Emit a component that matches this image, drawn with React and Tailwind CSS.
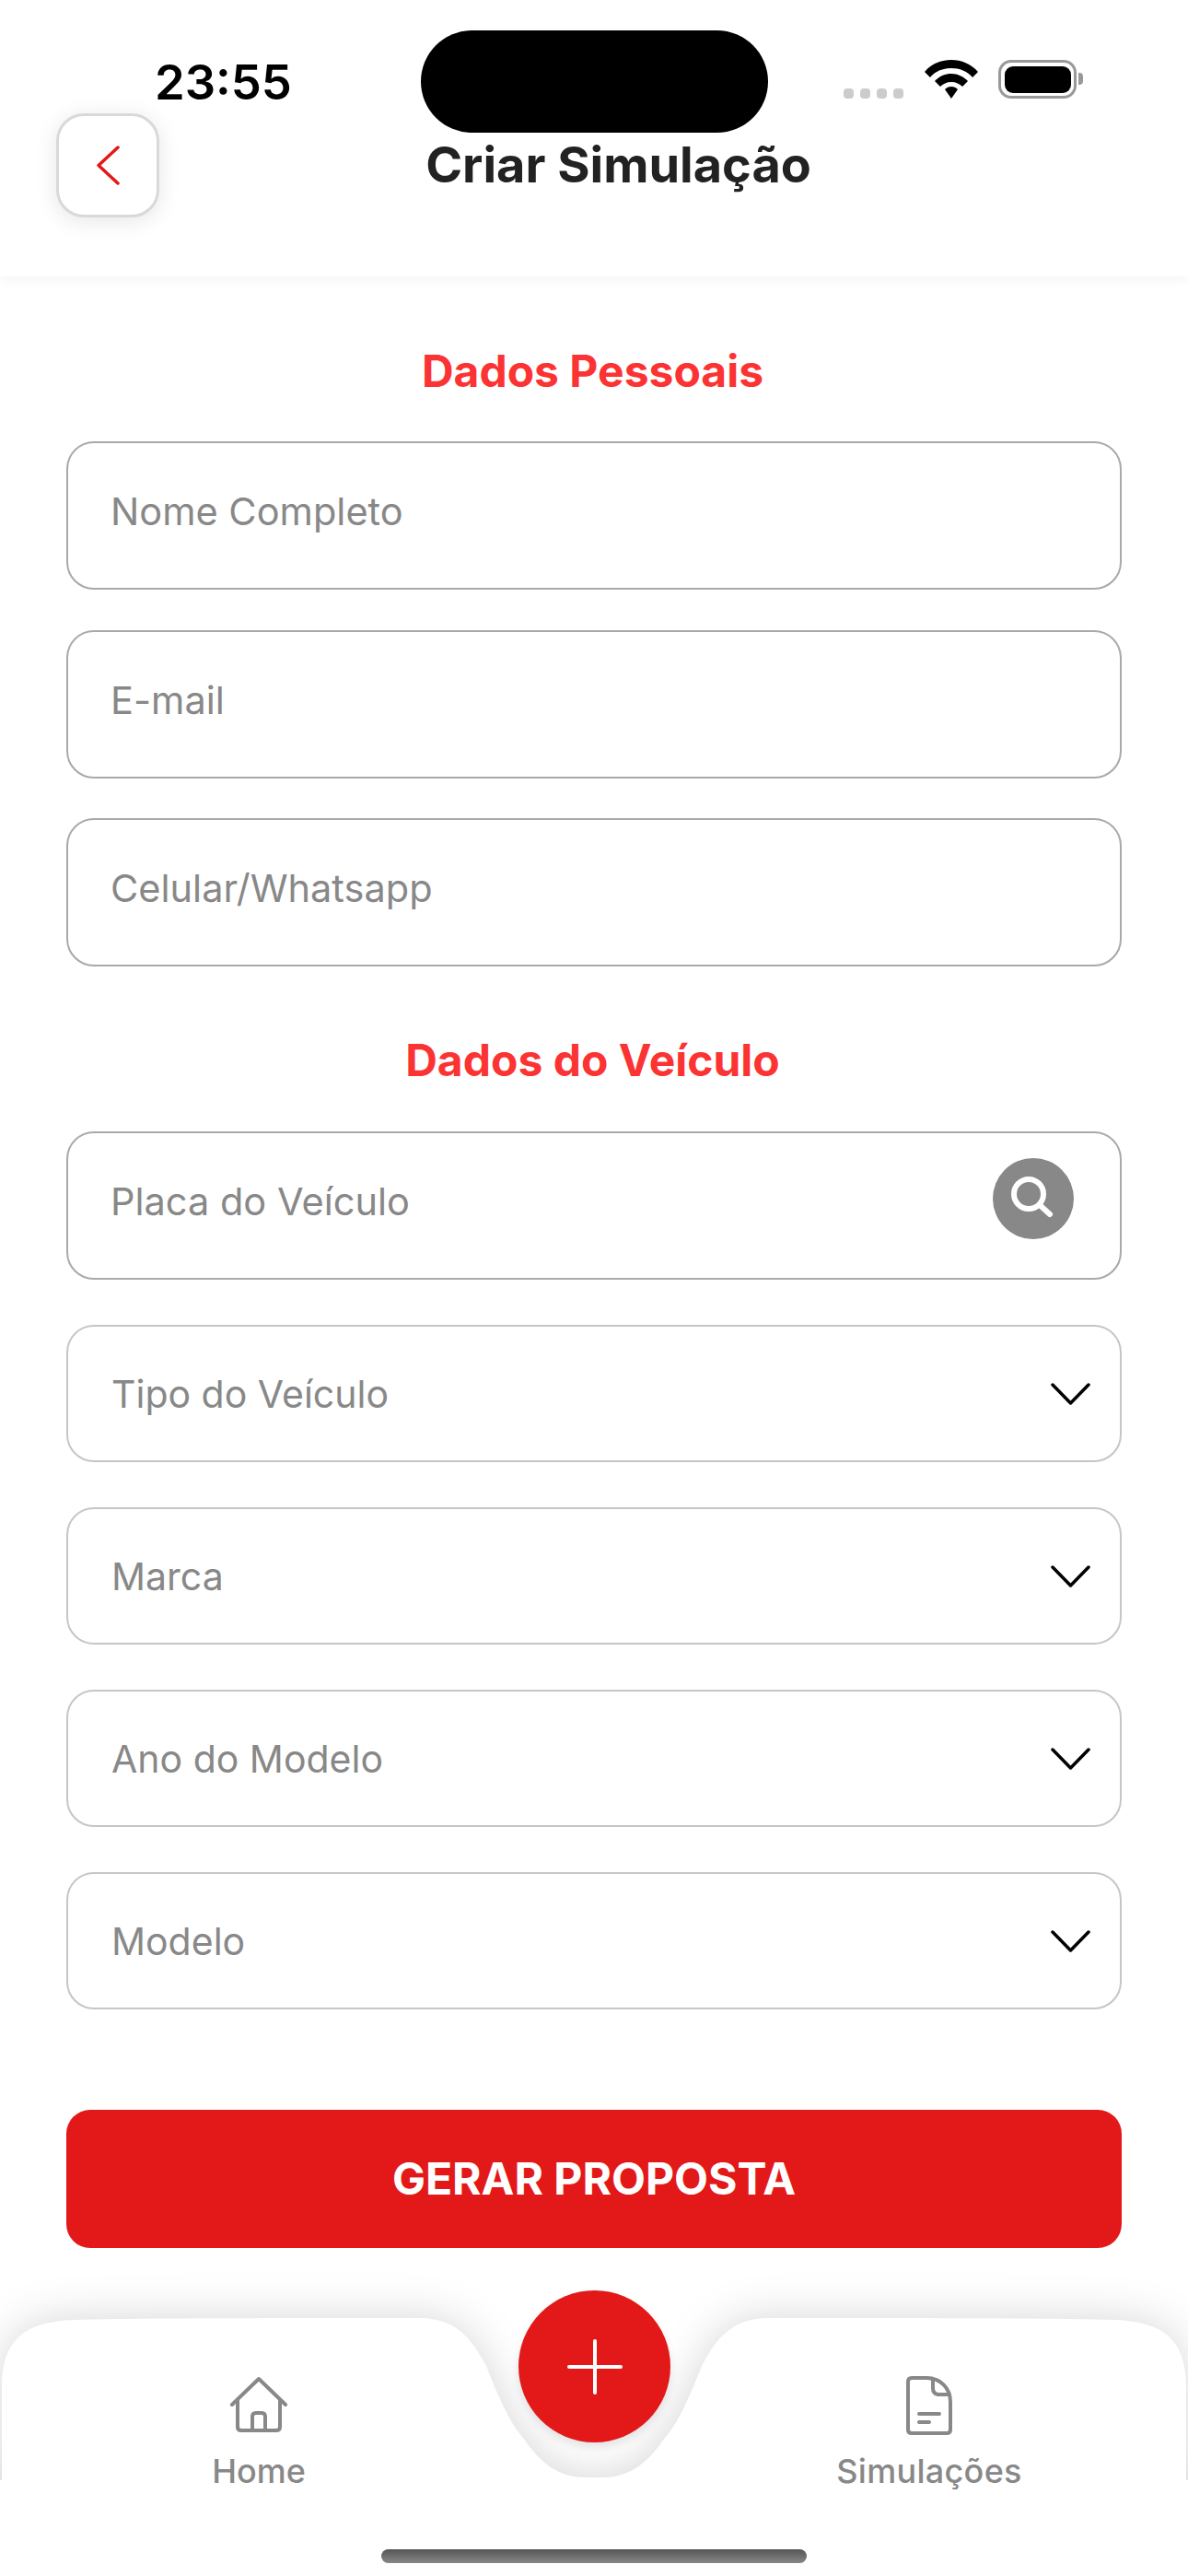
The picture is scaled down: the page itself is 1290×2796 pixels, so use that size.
const font = { fontFamily: "Inter, 'Noto Sans', sans-serif" };

function Field({ label, children }) {
  return (
    <div className="h-[161px] rounded-[30px] border-2 border-[#a9a9a9] bg-white flex items-center justify-between pl-[46px] pr-[50px]">
      <span className="text-[41.5px] leading-[50px] pb-[9px] text-[#888888]">{label}</span>
      {children}
    </div>
  );
}

function SelectField({ label }) {
  return (
    <div className="h-[149px] rounded-[30px] border-2 border-[#c6c6c6] bg-white flex items-center justify-between pl-[47px] pr-[32px]">
      <span className="text-[41px] leading-[50px] text-[#888888]">{label}</span>
      <svg width="44" height="26" viewBox="0 0 44 26" fill="none" stroke="#000" strokeWidth="3.5" strokeLinecap="round" strokeLinejoin="round">
        <path d="M3 3 L22.5 23 L42 3" />
      </svg>
    </div>
  );
}

function Heading({ children, className }) {
  return <h2 className={"h-[58px] pr-[3px] text-center text-[48px] leading-[58px] font-bold text-[#fb3333] " + className}>{children}</h2>;
}

function StatusBar() {
  return (
    <div className="flex items-start h-[144px] pt-[33px]">
      <div className="ml-[168px] w-[289px] mt-[24px] text-[52.5px] leading-[64px] font-semibold text-black">23:55</div>
      <div className="w-[377px] h-[111px] rounded-full bg-black" />
      <div className="ml-[82px] mt-[32px] h-[42px] flex items-end">
        <div className="flex gap-[7px] mr-[23px]">
          <span className="w-[11px] h-[11px] rounded-[4px] bg-[#cccccc]" />
          <span className="w-[11px] h-[11px] rounded-[4px] bg-[#cccccc]" />
          <span className="w-[11px] h-[11px] rounded-[4px] bg-[#cccccc]" />
          <span className="w-[11px] h-[11px] rounded-[4px] bg-[#cccccc]" />
        </div>
        <svg width="58" height="42" viewBox="0 0 58 42" fill="#000" className="mr-[22px]">
          <path d="M29 0 C40 0 50 4 58 13 L52 19 C46 12 38 9 29 9 C20 9 12 12 6 19 L0 13 C8 4 18 0 29 0 Z" />
          <path d="M29 15 C36 15 42 18 47 23 L41 29 C38 26 34 24 29 24 C24 24 20 26 17 29 L11 23 C16 18 22 15 29 15 Z" />
          <path d="M29 29 C32 29 34 30 36 32 L29 42 L22 32 C24 30 26 29 29 29 Z" />
        </svg>
        <div className="relative w-[85px] h-[42px] rounded-[14px] border-[3.5px] border-[#999999] p-[3.5px]">
          <div className="w-full h-full rounded-[9px] bg-black" />
          <div className="absolute left-[84px] top-[11px] w-[5px] h-[13px] rounded-r-[4px] bg-[#999999]" />
        </div>
      </div>
    </div>
  );
}

function Header() {
  return (
    <header className="h-[300px] bg-white shadow-[0_3px_12px_rgba(0,0,0,0.05)] relative">
      <StatusBar />
      <div className="flex items-center pl-[61px] pr-[120px] -mt-[21px]">
        <button className="w-[112px] h-[113px] rounded-[30px] bg-white border-[3px] border-[#d9d9d9] shadow-[0_4px_24px_rgba(0,0,0,0.1)] flex items-center justify-center shrink-0">
          <svg width="25" height="43" viewBox="0 0 25 43" fill="none" stroke="#e31919" strokeWidth="3.5" strokeLinecap="round" strokeLinejoin="round">
            <path d="M23 2 L2 21.5 L23 41" />
          </svg>
        </button>
        <h1 className="flex-1 text-center text-[54px] leading-[64px] font-bold text-[#222222] -mt-[2px]">Criar Simulação</h1>
      </div>
    </header>
  );
}

function Nav() {
  return (
    <nav className="relative h-[279px] mt-[76px]">
      <svg
        className="absolute left-0 top-0 overflow-visible drop-shadow-[0_0_24px_rgba(0,0,0,0.16)]"
        width="1290"
        height="279"
        viewBox="0 0 1290 279"
        fill="#fff"
      >
        <path d="M2 176 L2 75 C2 25 25 4 80 2 C150 0 300 0 455 0 C495 0 512 22 528 52 C545 95 555 115 568 130 C585 155 605 173 635 173 L655 173 C685 173 705 155 722 130 C735 115 745 95 762 52 C778 22 795 0 835 0 C990 0 1140 0 1210 2 C1265 4 1288 25 1288 75 L1288 176 L1320 176 L1320 300 L-30 300 L-30 176 Z" />
      </svg>
      <button className="absolute left-[563px] -top-[30px] w-[165px] h-[165px] rounded-full bg-[#e31919] shadow-[0_5px_10px_rgba(0,0,0,0.1)] flex items-center justify-center">
        <svg width="60" height="60" viewBox="0 0 60 60" fill="none" stroke="#fff" strokeWidth="4" strokeLinecap="round">
          <path d="M30 2 V58 M2 30 H58" />
        </svg>
      </button>
      <div className="relative flex justify-between px-[81px] pt-[63px]">
        <div className="w-[400px] flex flex-col items-center">
          <svg width="64" height="62" viewBox="0 0 64 62" fill="none" stroke="#888888" strokeWidth="4" strokeLinecap="round" strokeLinejoin="round">
            <path d="M3 31 L32 3 L61 31" />
            <path d="M9 26 V55 Q9 59 13 59 H51 Q55 59 55 55 V26" />
            <path d="M25 59 V44 Q25 40 29 40 H35 Q39 40 39 44 V59" />
          </svg>
          <span className="mt-[19px] text-[36px] leading-[44px] font-[450] text-[#888888]">Home</span>
        </div>
        <div className="w-[400px] flex flex-col items-center">
          <svg width="50" height="64" viewBox="0 0 50 64" fill="none" stroke="#888888" strokeWidth="4" strokeLinecap="round" strokeLinejoin="round">
            <path d="M6 2 H22 C37 2 48 13 48 28 V58 Q48 62 44 62 H6 Q2 62 2 58 V6 Q2 2 6 2 Z" />
            <path d="M29 4 V13 Q29 20 36 20 H47" />
            <path d="M14 41 H36 M14 50 H25" />
          </svg>
          <span className="mt-[17px] text-[36px] leading-[44px] font-[450] text-[#888888] tracking-[0.3px]">Simulações</span>
        </div>
      </div>
      <div className="relative mx-auto mt-[63px] w-[462px] h-[15px] rounded-full bg-gradient-to-b from-[#555555] to-[#888888]" />
    </nav>
  );
}

export default function App() {
  return (
    <div className="w-[1290px] h-[2796px] bg-white overflow-hidden" style={font}>
      <Header />
      <main className="px-[72px] pt-[74px]">
        <Heading className="mb-[47px]">Dados Pessoais</Heading>
        <div className="flex flex-col gap-[43.5px]">
          <Field label="Nome Completo" />
          <Field label="E-mail" />
          <Field label="Celular/Whatsapp" />
        </div>
        <Heading className="mt-[73px] mb-[48px]">Dados do Veículo</Heading>
        <Field label="Placa do Veículo">
          <div className="w-[88px] h-[88px] rounded-full bg-[#888888] flex items-center justify-center mb-[16px]">
            <svg width="50" height="50" viewBox="0 0 50 50" fill="none" stroke="#fff" strokeWidth="6" strokeLinecap="round">
              <circle cx="20" cy="20" r="16" />
              <path d="M32 32 L43 42" />
            </svg>
          </div>
        </Field>
        <div className="mt-[49px] flex flex-col gap-[49px]">
          <SelectField label="Tipo do Veículo" />
          <SelectField label="Marca" />
          <SelectField label="Ano do Modelo" />
          <SelectField label="Modelo" />
        </div>
        <button className="mt-[109px] w-full h-[150px] rounded-[26px] bg-[#e31919] text-white text-[48px] font-bold">GERAR PROPOSTA</button>
      </main>
      <Nav />
    </div>
  );
}
